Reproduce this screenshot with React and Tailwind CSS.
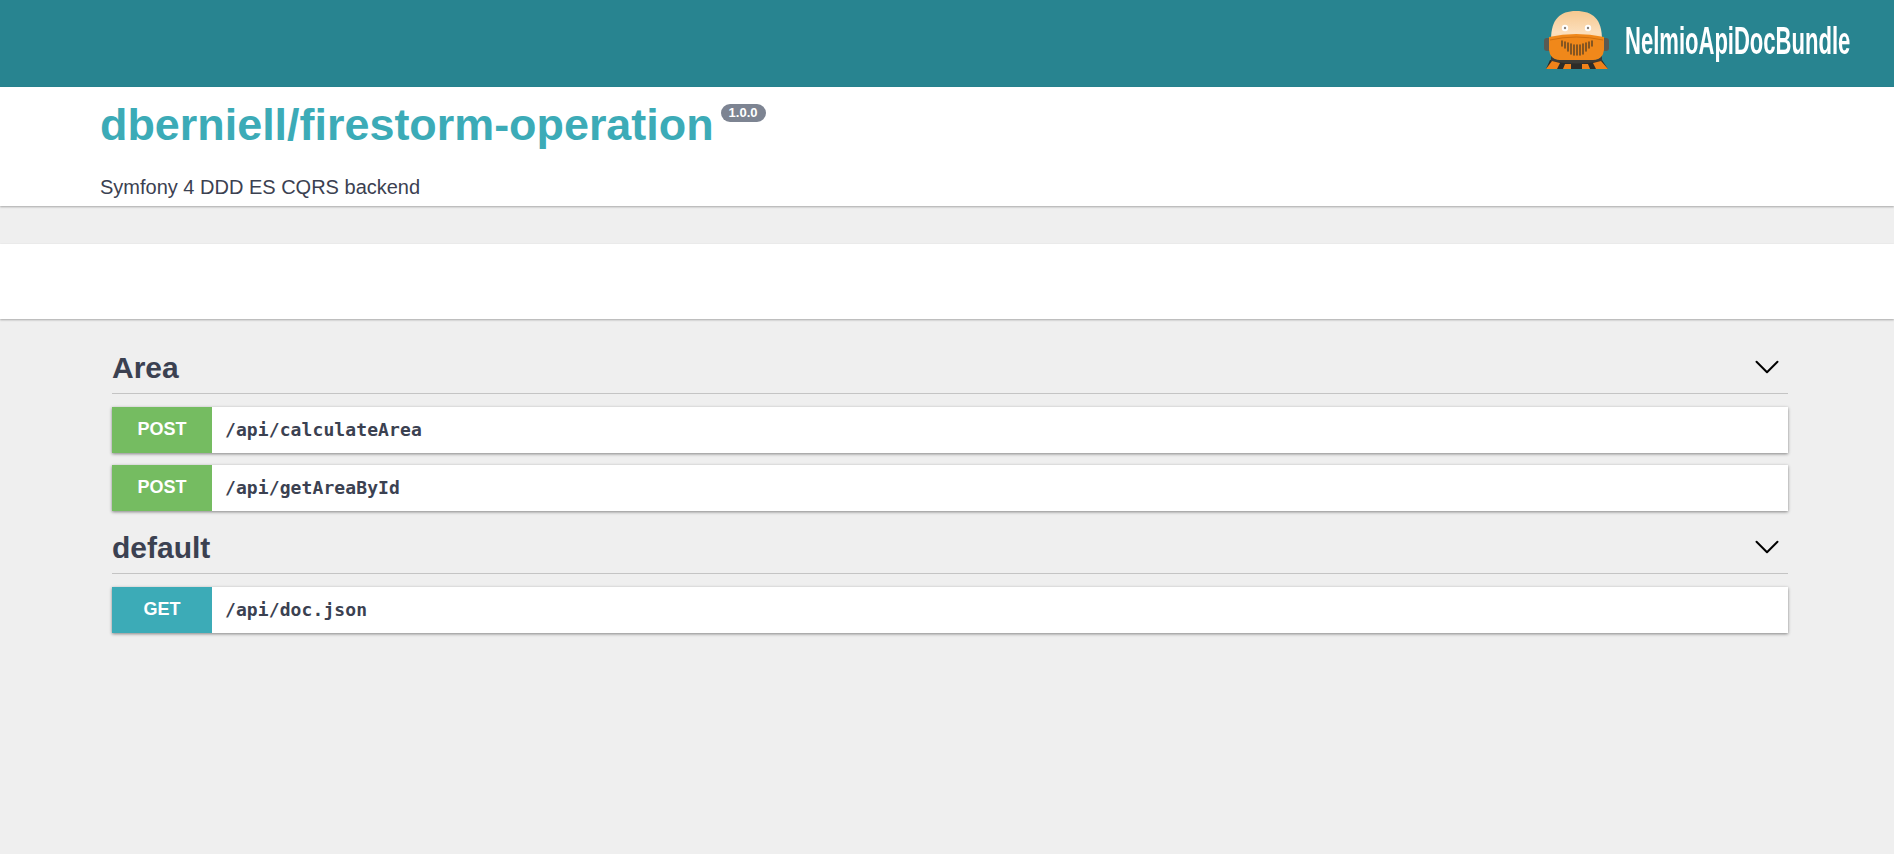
import { ChevronDown } from "lucide-react";

const sans = "font-['Liberation_Sans',Arial,sans-serif]";

// Orange robot mascot next to the bundle name
function Logo() {
  return (
    <svg viewBox="0 0 80 70" className="w-[80px] h-[70px] mb-[9px] blur-[0.6px]">
      <defs>
        <linearGradient id="dome" x1="0" y1="0" x2="0" y2="1">
          <stop offset="0" stopColor="#f6c890" />
          <stop offset="0.75" stopColor="#fcdfbc" />
          <stop offset="1" stopColor="#f8d6aa" />
        </linearGradient>
      </defs>
      <path d="M15 36 C15 15 24 7 40 7 C57 7 66 15 66 36 Z" fill="url(#dome)" />
      <rect x="8" y="34" width="10" height="13" rx="3" fill="#5a5a52" />
      <rect x="63" y="34" width="10" height="13" rx="3" fill="#5a5a52" />
      <path d="M14 56 L35 58 L46 58 L66 56 L72 65 L10 65 Z" fill="#2e2c28" />
      <path d="M13 33 Q40 27 68 33 L68 46 Q67 54 60 56 L21 56 Q14 54 13 46 Z" fill="#f0881a" />
      <path d="M14 36 Q40 30 67 36" stroke="#d0700f" strokeWidth="1" fill="none" />
      <path d="M15 52 Q18 56 24 56 L57 56 Q63 56 66 52 L66 57 Q40 62 15 57 Z" fill="#3c3b36" />
      <path d="M10 65 L16 57 L24 59 L21 65 Z" fill="#f0821a" />
      <path d="M27 65 L29 60 L35 60 L35 65 Z" fill="#f0821a" />
      <path d="M46 65 L46 60 L52 60 L54 65 Z" fill="#f0821a" />
      <path d="M60 65 L57 59 L65 57 L72 65 Z" fill="#f0821a" />
      <g stroke="#6b4a24" strokeWidth="1.6" strokeLinecap="round">
        <path d="M26 37 V42" />
        <path d="M29 38 V44" />
        <path d="M32 39 V47" />
        <path d="M35 40 V50" />
        <path d="M38 41 V51" />
        <path d="M41 41 V51" />
        <path d="M44 41 V51" />
        <path d="M47 40 V50" />
        <path d="M50 39 V47" />
        <path d="M53 38 V44" />
        <path d="M56 37 V42" />
      </g>
      <circle cx="29" cy="24" r="3.2" fill="#fff" />
      <circle cx="29" cy="24" r="1.2" fill="#8a8078" />
      <circle cx="52" cy="24" r="3.2" fill="#fff" />
      <circle cx="52" cy="24" r="1.2" fill="#8a8078" />
    </svg>
  );
}

function Operation({ method, path, color }) {
  return (
    <div className="flex h-[46px] mb-3 bg-white shadow-[0_1px_3px_rgba(0,0,0,0.45)]">
      <div className={`w-[100px] flex items-center justify-center pb-0.5 text-white font-bold text-lg ${color}`}>
        {method}
      </div>
      <div className="flex items-center pl-[13px] text-[#3b4151] font-['DejaVu_Sans_Mono',monospace] font-bold text-lg tracking-[0.1px]">
        {path}
      </div>
    </div>
  );
}

function Tag({ name, children }) {
  return (
    <section>
      <div className="flex items-center justify-between h-[50px] border-b border-[#c4c4c4] box-content mb-[13px]">
        <h2 className="text-[#3b4151] font-bold text-3xl">{name}</h2>
        <ChevronDown className="mb-[3px] text-black" size={42} strokeWidth={1.15} />
      </div>
      {children}
    </section>
  );
}

export default function App() {
  return (
    <div className={`min-h-screen bg-[#efefef] ${sans}`}>
      <header className="h-[87px] bg-[#288490] shadow-[0_1px_3px_rgba(0,0,0,0.35)] flex items-center justify-end pr-[43px]">
        <div className="flex items-center gap-[9px]">
          <Logo />
          <span className="w-[226px] mb-[6px] text-white font-bold text-[39px] leading-none font-['Liberation_Sans_Narrow','Liberation_Sans',sans-serif] scale-x-[0.565] origin-left whitespace-nowrap">
            NelmioApiDocBundle
          </span>
        </div>
      </header>

      <div className="h-[119px] bg-white shadow-[0_1px_2px_rgba(0,0,0,0.3)] pl-[100px]">
        <h1 className="pt-[10px] flex items-start text-[#3cabb7] font-bold text-[44.9px] leading-[56px]">
          dberniell/firestorm-operation
          <span className="ml-[7px] mt-[7px] h-[18px] px-[8px] rounded-[9px] bg-[#7d8492] text-white text-[13px] leading-[18px]">
            1.0.0
          </span>
        </h1>
        <p className="mt-[22px] text-[#3b4151] text-xl leading-[24px]">Symfony 4 DDD ES CQRS backend</p>
      </div>

      <div className="mt-[38px] h-[75px] bg-white shadow-[0_1px_2px_rgba(0,0,0,0.3)]" />

      <main className="ml-[112px] mr-[106px] mt-[24px]">
        <Tag name="Area">
          <Operation method="POST" path="/api/calculateArea" color="bg-[#75bc61]" />
          <Operation method="POST" path="/api/getAreaById" color="bg-[#75bc61]" />
        </Tag>
        <Tag name="default">
          <Operation method="GET" path="/api/doc.json" color="bg-[#3cabb7]" />
        </Tag>
      </main>
    </div>
  );
}
